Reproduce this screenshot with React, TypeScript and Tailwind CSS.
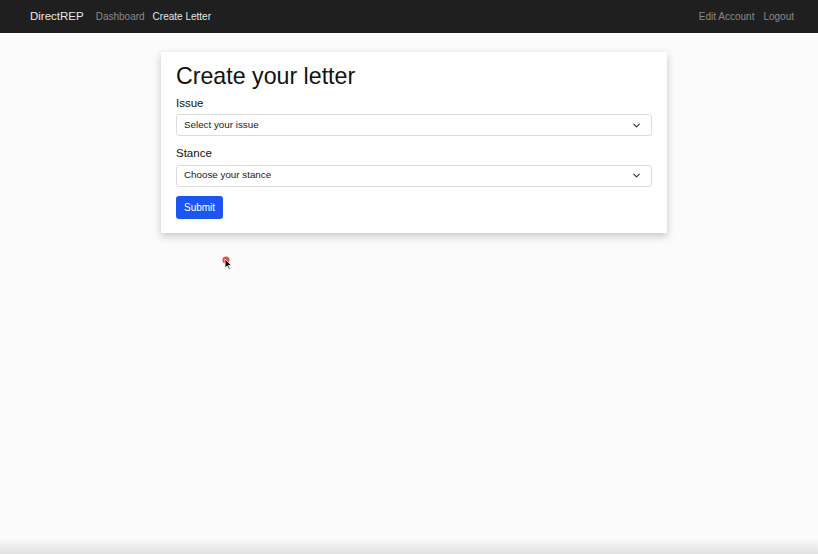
import { ChevronDown } from 'lucide-react';

const font = { fontFamily: '"Liberation Sans", Arial, sans-serif' };

function NavBar() {
  return (
    <nav className="h-[33px] bg-[#1f1f1f] flex items-center justify-between px-[30px] text-[10px]">
      <div className="flex items-center">
        <span className="text-[11.5px] text-[#e8e8e8] mr-[12px]">DirectREP</span>
        <span className="text-[#8a8a8a] mr-[8px]">Dashboard</span>
        <span className="text-[#e6e6e6]">Create Letter</span>
      </div>
      <div className="flex items-center gap-[9px] mr-[-6px]">
        <span className="text-[#8a8a8a]">Edit Account</span>
        <span className="text-[#8a8a8a]">Logout</span>
      </div>
    </nav>
  );
}

function SelectBox({ placeholder }: { placeholder: string }) {
  return (
    <div className="h-[22px] border border-[#dcdcdc] rounded-[3px] bg-white flex items-center justify-between pl-[7px] pr-[9px] text-[9.8px] text-[#222]">
      <span>{placeholder}</span>
      <ChevronDown size={11} strokeWidth={2.5} className="text-[#333]" />
    </div>
  );
}

function Cursor() {
  return (
    <svg width="14" height="16" viewBox="0 0 14 16" className="absolute left-[221px] top-[255px]">
      <circle cx="5" cy="5" r="3.6" fill="#e53935" opacity="0.9" />
      <path d="M4 4 L4 13 L6.2 11 L7.8 14.5 L9.2 13.9 L7.6 10.5 L10.5 10.3 Z" fill="#111" stroke="#fff" strokeWidth="0.8" />
    </svg>
  );
}

export default function App() {
  return (
    <div className="w-[818px] h-[554px] bg-[#fbfbfb] flex flex-col relative overflow-hidden" style={font}>
      <NavBar />
      <main className="flex-1 flex justify-center pt-[19px]">
        <div className="w-[506px] h-[181px] bg-white shadow-[0_3px_8px_rgba(0,0,0,0.22)] px-[15px] pt-[9px] ml-[10px]">
          <h1 className="text-[23.2px] leading-[30px] text-[#111] mb-[4px]">Create your letter</h1>
          <label className="block text-[11.5px] font-medium text-[#111] mb-[2px]">Issue</label>
          <SelectBox placeholder="Select your issue" />
          <label className="block text-[11.5px] font-medium text-[#111] mt-[9px] mb-[2px]">Stance</label>
          <SelectBox placeholder="Choose your stance" />
          <button className="mt-[9px] h-[23px] px-[8px] rounded-[3px] bg-[#1b56f0] text-white text-[10px]">
            Submit
          </button>
        </div>
      </main>
      <div className="h-[16px] bg-gradient-to-b from-[#fbfbfb] to-[#e2e2e2]" />
      <Cursor />
    </div>
  );
}
